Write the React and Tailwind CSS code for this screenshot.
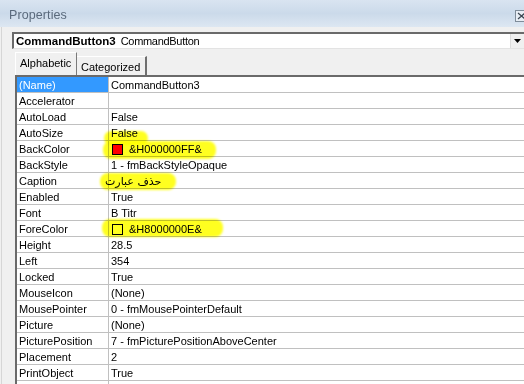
import React from "react";

const rows = [
  ["(Name)", "CommandButton3"],
  ["Accelerator", ""],
  ["AutoLoad", "False"],
  ["AutoSize", "False"],
  ["BackColor", "back"],
  ["BackStyle", "1 - fmBackStyleOpaque"],
  ["Caption", "caption"],
  ["Enabled", "True"],
  ["Font", "B Titr"],
  ["ForeColor", "fore"],
  ["Height", "28.5"],
  ["Left", "354"],
  ["Locked", "True"],
  ["MouseIcon", "(None)"],
  ["MousePointer", "0 - fmMousePointerDefault"],
  ["Picture", "(None)"],
  ["PicturePosition", "7 - fmPicturePositionAboveCenter"],
  ["Placement", "2"],
  ["PrintObject", "True"],
  ["", ""],
];

function Value({ v }) {
  if (v === "back")
    return (
      <span className="flex items-center">
        <span className="w-[11px] h-[11px] border border-black bg-[#ff0000] ml-[1px] mr-[6px]" />
        <span>&amp;H000000FF&amp;</span>
      </span>
    );
  if (v === "fore")
    return (
      <span className="flex items-center">
        <span className="w-[11px] h-[11px] border border-black bg-white ml-[1px] mr-[6px]" />
        <span>&amp;H8000000E&amp;</span>
      </span>
    );
  if (v === "caption")
    return (
      <span className="font-['DejaVu_Sans',sans-serif] text-[11px] ml-[-6px]" dir="rtl">
        حذف عبارت
      </span>
    );
  return <span>{v}</span>;
}

export default function App() {
  return (
    <div className="w-[524px] h-[384px] bg-[#f0f0f0] overflow-hidden relative font-['Liberation_Sans',Arial,sans-serif] text-[11px] text-black">
      {/* title bar */}
      <div className="h-[27px] bg-gradient-to-b from-[#d9e4f1] via-[#cbdaea] to-[#dde7f2] flex items-center pl-[9px] pt-[3px] relative">
        <span className="text-[12.5px] text-[#5a6a7c] tracking-[0.1px]">Properties</span>
        <div className="absolute left-[515px] top-[10px] w-[13px] h-[12px] border border-[#7f8c99] bg-[#e8eef5] flex items-center justify-center">
          <svg width="9" height="8" viewBox="0 0 9 8">
            <path d="M1 1 L8 7 M8 1 L1 7" stroke="#3a4550" strokeWidth="1.2" />
          </svg>
        </div>
      </div>
      <div className="h-[5px] border-l border-[#d6d6d6] ml-[1px]" />
      <div className="border-l border-[#d6d6d6] ml-[1px]">
        {/* combobox */}
        <div className="pl-[10px] h-[17px] flex">
          <div className="flex-1 flex border-t-2 border-l-2 border-[#6a6a6a] border-b border-b-[#e3e3e3] bg-white">
            <div className="flex-1 flex items-center pl-[2px] leading-[14px]">
              <span className="font-bold text-[11.5px]">CommandButton3</span>
              <span className="ml-[5px] text-[11px] tracking-[-0.3px]">CommandButton</span>
            </div>
            <div className="w-[14px] h-full bg-[#f0f0f0] border-l border-[#dcdcdc] flex items-center justify-center">
              <svg width="7" height="4" viewBox="0 0 7 4">
                <path d="M0 0 H7 L3.5 4 Z" fill="#000" />
              </svg>
            </div>
          </div>
        </div>
        {/* tabs */}
        <div className="h-[26px] flex items-end pl-[13px]">
          <div className="h-[23px] w-[62px] bg-[#f0f0f0] border-t border-l border-white border-r border-r-[#7a7a7a] pl-[4px] pt-[4px] leading-[13px] text-[11px]">
            Alphabetic
          </div>
          <div className="h-[19px] w-[70px] bg-[#f0f0f0] border-t border-white border-r-2 border-r-[#6f6f6f] pl-[4px] pt-[4px] leading-[13px] text-[11px]">
            Categorized
          </div>
        </div>
        {/* grid */}
        <div className="ml-[13px] border-t-2 border-l-2 border-[#6a6a6a] bg-white">
          {rows.map(([n, v], i) => (
            <div key={i} className="flex h-[16px] border-b border-[#c0c0c0] leading-[16px]">
              <div
                className={
                  "w-[92px] shrink-0 border-r border-[#c0c0c0] pl-[2px] " +
                  (i === 0 ? "bg-[#3399ff] text-white" : "")
                }
              >
                {n}
              </div>
              <div className="flex-1 pl-[2px] whitespace-nowrap">
                <Value v={v} />
              </div>
            </div>
          ))}
        </div>
      </div>
      {/* marker highlights */}
      <div className="absolute left-[104px] top-[131px] w-[44px] h-[14px] rounded-[7px] bg-[#ffff20] mix-blend-multiply blur-[1px]" />
      <div className="absolute left-[103px] top-[141px] w-[113px] h-[18px] rounded-[8px] bg-[#ffff20] mix-blend-multiply blur-[1px]" />
      <div className="absolute left-[100px] top-[173px] w-[76px] h-[17px] rounded-[8px] bg-[#ffff20] mix-blend-multiply blur-[1px]" />
      <div className="absolute left-[102px] top-[219px] w-[121px] h-[18px] rounded-[8px] bg-[#ffff20] mix-blend-multiply blur-[1px]" />
    </div>
  );
}
